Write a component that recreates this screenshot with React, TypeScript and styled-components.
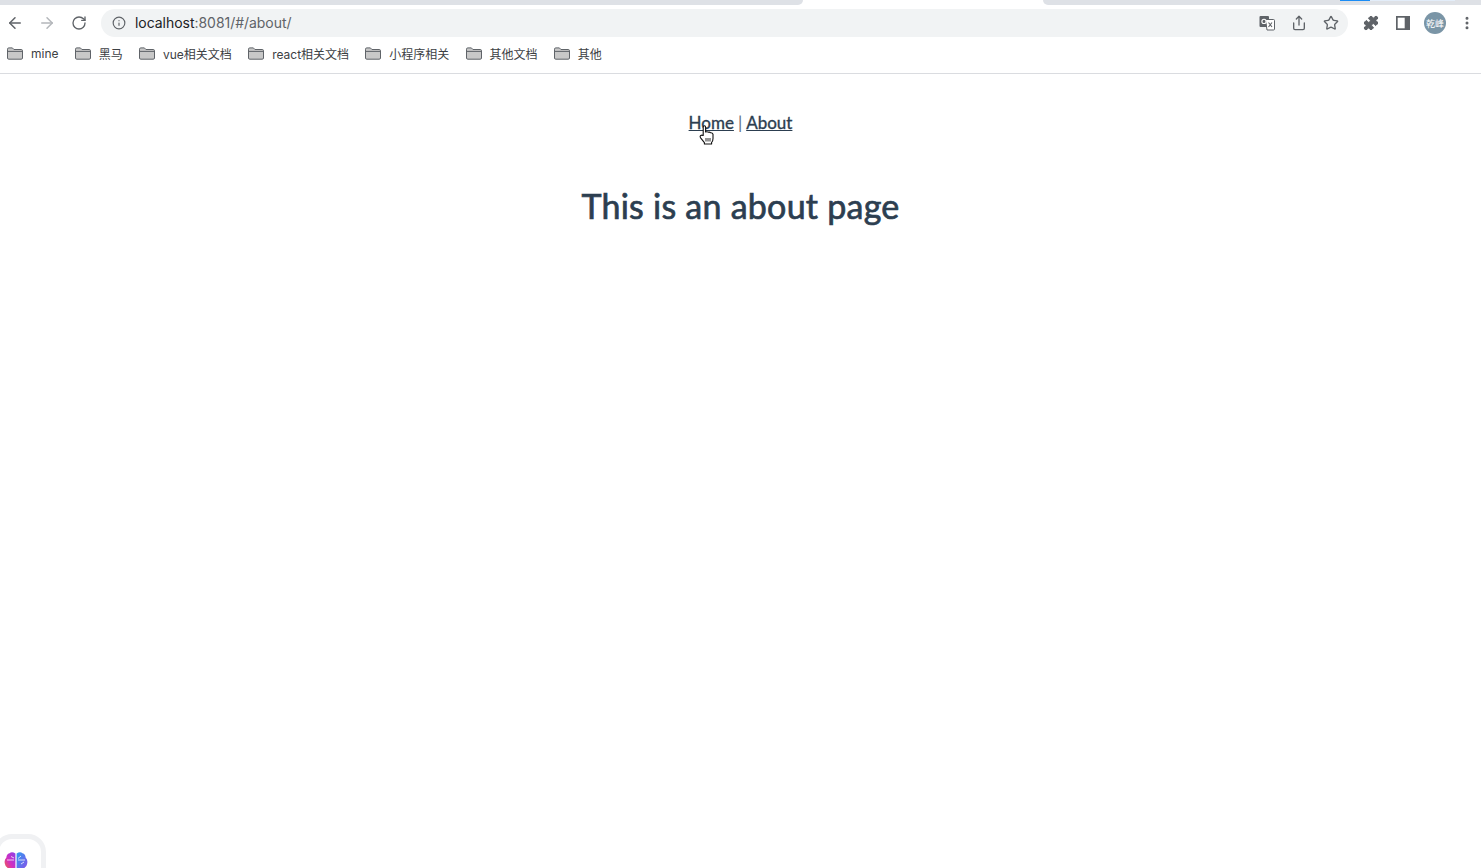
import styled, { createGlobalStyle } from 'styled-components';
import {
  ArrowLeft,
  ArrowRight,
  RotateCw,
  Info,
  Share,
  Star,
  Puzzle,
  EllipsisVertical,
} from 'lucide-react';

const bookmarks = ['mine', '黑马', 'vue相关文档', 'react相关文档', '小程序相关', '其他文档', '其他'];

const GlobalStyle = createGlobalStyle`
  html, body {
    margin: 0;
    padding: 0;
    height: 100%;
    background: #fff;
    overflow: hidden;
  }

  #root {
    height: 100%;
  }
`;

const FolderIcon = () => (
  <svg width="16" height="13" viewBox="0 0 16 13">
    <path
      d="M0.5 2.2 Q0.5 0.9 1.8 0.9 H5.4 L6.9 2.5 H14.2 Q15.5 2.5 15.5 3.8 V11 Q15.5 12.2 14.2 12.2 H1.8 Q0.5 12.2 0.5 11 Z"
      fill="#c8c8c8"
      stroke="#5f6368"
    />
    <path d="M1 4.4 H15" stroke="#5f6368" />
  </svg>
);

const TranslateIcon = () => (
  <svg width="16" height="16" viewBox="0 0 16 16">
    <rect x="0.5" y="1" width="9.5" height="11" rx="1" fill="#5f6368" />
    <path d="M6.5 4.5 H14.5 Q15.5 4.5 15.5 5.5 V14 Q15.5 15 14.5 15 H8 Z" fill="#fff" stroke="#5f6368" />
    <circle cx="5" cy="6.4" r="2.1" fill="none" stroke="#fff" strokeWidth="1.1" />
    <path d="M9.5 7.5 L13 12 M13 7.5 L9.5 12" stroke="#5f6368" strokeWidth="1.1" />
  </svg>
);

const SidePanelIcon = () => (
  <svg width="14" height="14" viewBox="0 0 14 14">
    <rect x="0" y="0" width="14" height="14" fill="#5f6368" />
    <rect x="1.7" y="1.7" width="7" height="10.6" fill="#fff" />
  </svg>
);

const HandCursor = () => (
  <svg width="16" height="20" viewBox="0 0 16 20">
    <path
      d="M4.2 10.5 V2.2 Q4.2 0.8 5.4 0.8 Q6.6 0.8 6.6 2.2 V7 Q8.4 6.4 9.2 7.2 Q10.8 6.8 11.5 7.8 Q13.4 7.6 14 9.2 V13.5 Q14 16 12.6 17.4 V19 H5.4 V17.6 L1.6 12.8 Q0.6 11.2 1.8 10.4 Q3 9.8 4.2 10.5 Z"
      fill="#fff"
      stroke="#111"
      strokeWidth="1.1"
      strokeLinejoin="round"
    />
    <path d="M7 13 V16.5 M9 13 V16.5 M11 13 V16.5" stroke="#111" strokeWidth="0.9" />
  </svg>
);

const BrainIcon = () => (
  <svg width="24" height="18" viewBox="0 0 24 18">
    <defs>
      <linearGradient id="brainLeft" x1="0" y1="1" x2="1" y2="0">
        <stop offset="0" stopColor="#f0643c" />
        <stop offset="0.45" stopColor="#d22fc0" />
        <stop offset="1" stopColor="#8a3fe8" />
      </linearGradient>
      <linearGradient id="brainRight" x1="0" y1="0" x2="1" y2="1">
        <stop offset="0" stopColor="#2f9bf0" />
        <stop offset="1" stopColor="#8a4fe8" />
      </linearGradient>
    </defs>
    <path d="M11.4 1.5 Q8 -0.6 5.5 1.2 Q2.5 2 2.4 5.6 Q0 8 0.8 11.5 Q1.4 16 5.5 16.5 Q9 19 11.4 16.5 Z" fill="url(#brainLeft)" />
    <path d="M12.6 1.5 Q16 -0.6 18.5 1.2 Q21.5 2 21.6 5.6 Q24 8 23.2 11.5 Q22.6 16 18.5 16.5 Q15 19 12.6 16.5 Z" fill="url(#brainRight)" />
    <path d="M3 8 H10 M7 4.5 L10 6 M14 8 H21 M17 4 L14 6.5 M17 12 L20 10" stroke="#fff" strokeWidth="1" opacity="0.75" fill="none" />
  </svg>
);

const App = () => {
  return (
    <Page>
      <GlobalStyle />

      <TabStrip>
        <InactiveTab />
        <ActiveTab />
        <InactiveTabRight>
          <LoadTrack>
            <LoadFill />
          </LoadTrack>
        </InactiveTabRight>
      </TabStrip>

      <Toolbar>
        <NavButton>
          <ArrowLeft size={18} color="#5f6368" strokeWidth={2} />
        </NavButton>
        <NavButton>
          <ArrowRight size={18} color="#b4b7bb" strokeWidth={2} />
        </NavButton>
        <NavButton>
          <RotateCw size={16} color="#5f6368" strokeWidth={2} />
        </NavButton>

        <Omnibox>
          <InfoSlot>
            <Info size={14} color="#5f6368" strokeWidth={2} />
          </InfoSlot>
          <Url>
            localhost<UrlMuted>:8081/#/about/</UrlMuted>
          </Url>
          <OmniboxActions>
            <ToolButton>
              <TranslateIcon />
            </ToolButton>
            <ToolButton>
              <Share size={16} color="#5f6368" strokeWidth={2} />
            </ToolButton>
            <ToolButton>
              <Star size={16} color="#5f6368" strokeWidth={2} />
            </ToolButton>
          </OmniboxActions>
        </Omnibox>

        <Extensions>
          <ToolButton>
            <Puzzle size={16} color="#5f6368" fill="#5f6368" strokeWidth={1.5} />
          </ToolButton>
          <ToolButton>
            <SidePanelIcon />
          </ToolButton>
          <ToolButton>
            <Avatar>乾峰</Avatar>
          </ToolButton>
          <ToolButton>
            <EllipsisVertical size={16} color="#5f6368" strokeWidth={2.5} />
          </ToolButton>
        </Extensions>
      </Toolbar>

      <BookmarkBar>
        {bookmarks.map((name) => (
          <Bookmark key={name}>
            <FolderIcon />
            <span>{name}</span>
          </Bookmark>
        ))}
      </BookmarkBar>

      <Content>
        <Nav>
          <NavLinkWrap>
            <NavLink href="#/">Home</NavLink>
            <CursorSpot>
              <HandCursor />
            </CursorSpot>
          </NavLinkWrap>
          <Divider>|</Divider>
          <NavLink href="#/about">About</NavLink>
        </Nav>
        <Title>This is an about page</Title>

        <FloatWidget>
          <BrainIcon />
        </FloatWidget>
      </Content>
    </Page>
  );
};

export default App;

const Page = styled.div`
  height: 100%;
  display: flex;
  flex-direction: column;
  font-family: Inter, 'Noto Sans CJK SC', sans-serif;
`;

const TabStrip = styled.div`
  flex: none;
  height: 5px;
  display: flex;
  background: #fff;
`;

const InactiveTab = styled.div`
  width: 803px;
  background: #dee1e6;
  border-bottom-right-radius: 6px;
`;

const ActiveTab = styled.div`
  width: 240px;
  background: #fff;
`;

const InactiveTabRight = styled.div`
  flex: 1;
  background: #dee1e6;
  border-bottom-left-radius: 6px;
  display: flex;
  padding-left: 297px;
`;

const LoadTrack = styled.div`
  width: 115px;
  height: 1px;
  background: #e3edf9;
`;

const LoadFill = styled.div`
  width: 30px;
  height: 1px;
  background: #1a8cf5;
`;

const Toolbar = styled.div`
  flex: none;
  height: 36px;
  display: flex;
  align-items: center;
  margin-left: -1px;
`;

const NavButton = styled.div`
  width: 32px;
  height: 32px;
  display: flex;
  align-items: center;
  justify-content: center;
  flex: none;
`;

const Omnibox = styled.div`
  margin-left: 6px;
  width: 1247px;
  height: 28px;
  flex: none;
  display: flex;
  align-items: center;
  background: #f1f3f4;
  border-radius: 14px;
`;

const InfoSlot = styled.div`
  box-sizing: border-box;
  width: 34px;
  padding-left: 2px;
  display: flex;
  justify-content: center;
  flex: none;
`;

const Url = styled.div`
  flex: 1;
  padding-bottom: 1px;
  font-size: 14px;
  letter-spacing: -0.04px;
  color: #202124;
`;

const UrlMuted = styled.span`
  color: #5f6368;
`;

const OmniboxActions = styled.div`
  display: flex;
  align-items: center;
  padding-right: 1px;
`;

const ToolButton = styled.div`
  width: 32px;
  height: 28px;
  display: flex;
  align-items: center;
  justify-content: center;
  flex: none;
`;

const Extensions = styled.div`
  display: flex;
  align-items: center;
  margin-left: 7px;
`;

const Avatar = styled.div`
  width: 22px;
  height: 22px;
  border-radius: 50%;
  background: #7a95a6;
  color: #fff;
  font-size: 9px;
  display: flex;
  align-items: center;
  justify-content: center;
  white-space: nowrap;
`;

const BookmarkBar = styled.div`
  flex: none;
  height: 25px;
  padding: 0 0 7px 7px;
  display: flex;
  align-items: center;
  gap: 16.25px;
  border-bottom: 1px solid #dadce0;
`;

const Bookmark = styled.div`
  display: flex;
  align-items: center;
  gap: 8px;
  font-size: 12px;
  color: #3c4043;
  white-space: nowrap;
`;

const Content = styled.main`
  flex: 1;
  position: relative;
  overflow: hidden;
  text-align: center;
  font-family: Lato, 'Noto Sans', sans-serif;
  color: #2c3e50;
`;

const Nav = styled.nav`
  padding-top: 38px;
  font-size: 17px;
  line-height: 22px;
  display: flex;
  justify-content: center;
  gap: 4px;
`;

const NavLinkWrap = styled.span`
  position: relative;
`;

const NavLink = styled.a`
  color: #2c3e50;
  font-weight: 400;
  -webkit-text-stroke: 0.35px #2c3e50;
  text-decoration: underline;
`;

const CursorSpot = styled.span`
  position: absolute;
  left: 10px;
  top: 13px;
  line-height: 0;
`;

const Divider = styled.span`
  color: #5d6b79;
  font-weight: 400;
`;

const Title = styled.h1`
  margin: 52px 0 0;
  font-size: 34px;
  line-height: 40px;
  font-weight: 400;
  letter-spacing: 0.25px;
  -webkit-text-stroke: 0.7px #2c3e50;
`;

const FloatWidget = styled.div`
  position: absolute;
  left: -6px;
  bottom: -20px;
  box-sizing: border-box;
  width: 52px;
  height: 54px;
  background: #fff;
  border: 5px solid #f0f1f3;
  border-radius: 18px;
  padding: 13px 0 0 5px;
  display: flex;
  align-items: flex-start;
`;
